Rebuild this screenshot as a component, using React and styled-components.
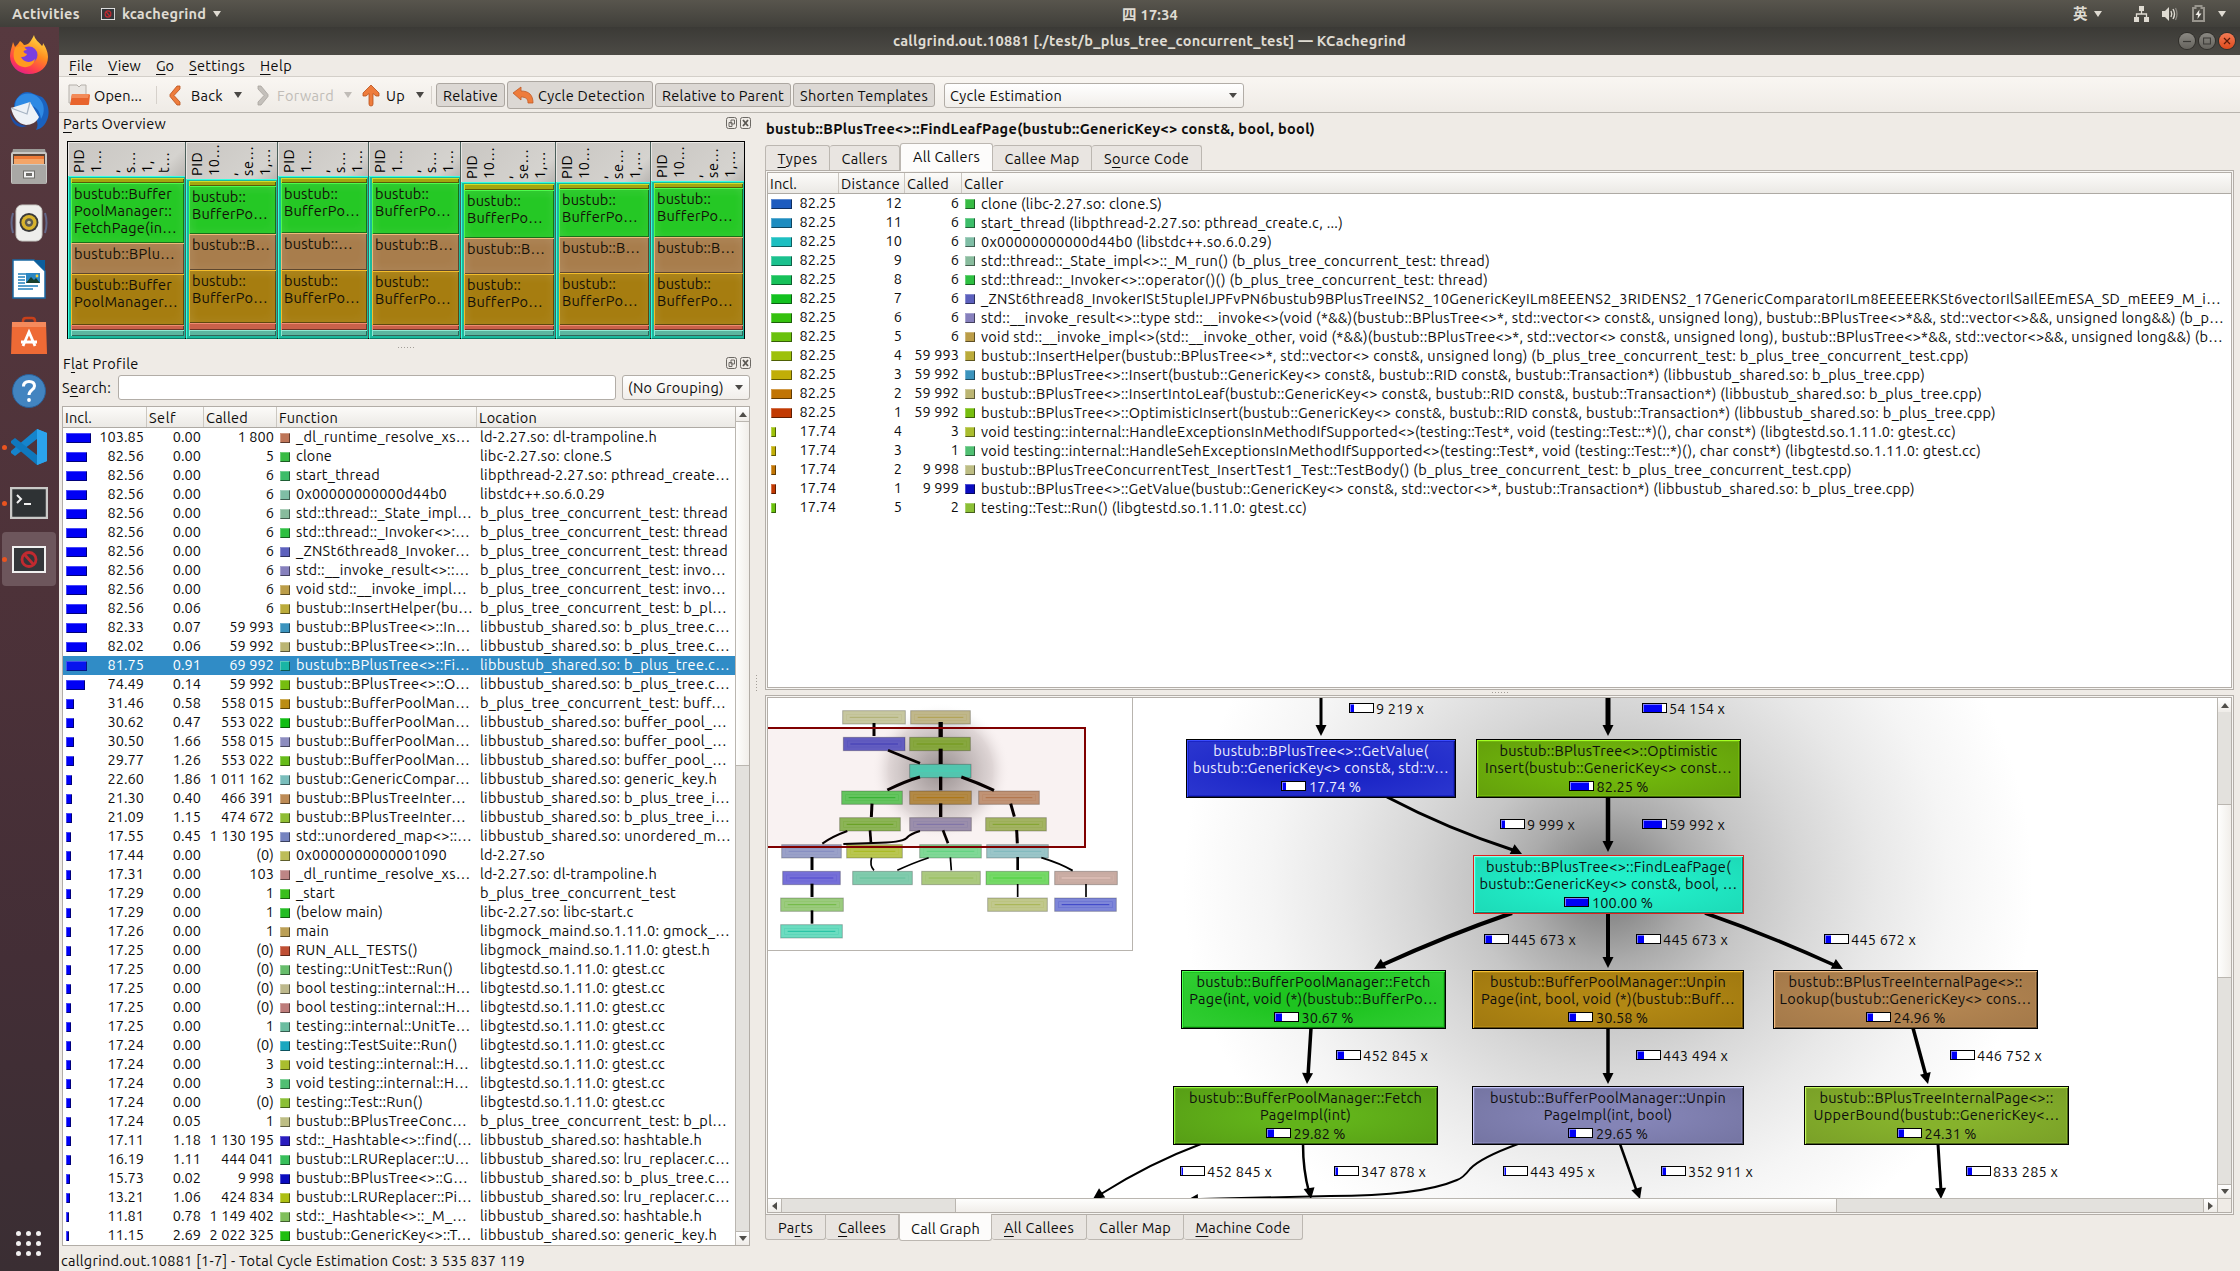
import React, { useLayoutEffect, useRef, useState } from 'react';
import styled, { createGlobalStyle, css } from 'styled-components';

const GlobalStyle = createGlobalStyle`
  * { box-sizing: border-box; }
  html, body { margin: 0; padding: 0; overflow: hidden; }
  body {
    font-family: Ubuntu, "Noto Sans", "Noto Sans CJK SC", sans-serif;
    font-size: 14.5px; line-height: 17px; color: #0c0c0c; background: #efebe6;
  }
`;

/* ---------- text ---------- */
const Label = styled.span`
  display: inline-block; white-space: pre; flex: none;
  font-weight: ${p => (p.$bold ? 700 : 400)};
  color: ${p => p.$color || 'inherit'};
`;
function Fit({ w, bold, color, children }) {
  const ref = useRef(null);
  const [spacing, setSpacing] = useState(0);
  useLayoutEffect(() => {
    if (!w) return;
    const el = ref.current;
    el.style.letterSpacing = '0px';
    const natural = el.getBoundingClientRect().width;
    const s = (w - natural) / el.textContent.length;
    el.style.letterSpacing = s + 'px';
    setSpacing(s);
  }, [w, children]);
  return <Label ref={ref} $bold={bold} $color={color} style={{ letterSpacing: spacing }}>{children}</Label>;
}
const U = styled.u`text-decoration: underline; text-underline-offset: 3px; text-decoration-thickness: 1px; text-decoration-skip-ink: none;`;

/* ---------- shell ---------- */
const Screen = styled.div`width: 2240px; height: 1271px; display: flex; flex-direction: column; overflow: hidden;`;
const TopBar = styled.div`
  height: 27px; flex: none; position: relative; display: flex; align-items: center; justify-content: space-between;
  padding: 0 14px 0 12px; background: linear-gradient(#58554d, #403f3a); color: #dfdbd2;
`;
const TopGroup = styled.div`display: flex; align-items: center; height: 27px;`;
const TopCenter = styled.div`position: absolute; left: 1122px; top: 6px;`;
const Gap = styled.div`width: ${p => p.$w}px; flex: none;`;
const Body = styled.div`flex: 1; display: flex; min-height: 0;`;
const Launcher = styled.div`
  width: 59px; flex: none; display: flex; flex-direction: column;
  background: linear-gradient(#57393f, #4d3239 45%, #432e36 75%, #3a2e33);
`;
const Slot = styled.div`
  height: 56px; display: flex; align-items: center; justify-content: center; position: relative; padding-right: 2px;
  svg { display: block; }
  ${p => p.$active && css`
    &::before { content: ''; position: absolute; inset: 1px 3px 1px 2px; background: #6d565c; border-radius: 4px; }
    svg { position: relative; }
  `}
  ${p => p.$running && css`
    &::after { content: ''; position: absolute; left: 2px; top: 26px; width: 5px; height: 5px; border-radius: 50%; background: #e95420; }
  `}
`;
const AppsGrid = styled.div`
  margin: auto 2px 15px 0; align-self: center; display: grid; grid-template-columns: repeat(3, 5px); gap: 5px;
  i { width: 5px; height: 5px; border-radius: 50%; background: #f3f1f1; }
`;
const Window = styled.div`flex: 1; min-width: 0; display: flex; flex-direction: column; background: #efebe6;`;
const TitleBar = styled.div`
  height: 28px; flex: none; display: flex; align-items: center; padding: 0 5px 2px 834px;
  background: linear-gradient(#3b3a36, #4c4a45); color: #dfdbd2;
`;
const Buttons = styled.div`display: flex; gap: 4px; margin: 2px 0 0 auto;`;
const WinButton = styled.div`
  width: 16px; height: 16px; border-radius: 50%; display: flex; align-items: center; justify-content: center;
  background: ${p => (p.$close ? 'linear-gradient(#f47b55, #dd4a1c)' : 'linear-gradient(#8b8983, #65635d)')};
  box-shadow: 0 0 0 1px rgba(40,38,34,.7);
`;
const MenuBar = styled.div`
  height: 22px; flex: none; display: flex; align-items: center; padding-left: 10px; gap: 15px; border-bottom: 1px solid #d3cfc9;
`;
const ToolBar = styled.div`
  height: 36px; flex: none; display: flex; align-items: center; padding: 1px 0 0 9px;
  background: linear-gradient(#f9f6f2, #efebe6); border-bottom: 1px solid #b8b4ae;
  svg { flex: none; }
`;
const ToolSeparator = styled.div`width: 1px; height: 18px; background: #d6d1cb; flex: none;`;
const ToggleButton = styled.div`
  width: ${p => p.$w}px; height: ${p => p.$h || 24}px; flex: none; display: flex; align-items: center; gap: 4px;
  padding-left: ${p => (p.$pad || 7) - 1}px; margin-right: 2px; background: #dcd8d4; border: 1px solid #aca7a1; border-radius: 3px;
`;
const Combo = styled.div`
  width: ${p => p.$w}px; height: 25px; flex: none; display: flex; align-items: center; justify-content: space-between;
  padding: 0 6px 0 5px; border: 1px solid #b2ada7; border-radius: 3px; background: linear-gradient(#fff, #f1eeea);
`;
const Caret = styled.i`
  width: 0; height: 0; flex: none; border: solid transparent;
  border-width: ${p => (p.$small ? '5px 4px 0' : '6px 4.5px 0')};
  border-top-color: ${p => p.$color || '#4a4845'};
`;
const Main = styled.div`flex: 1; min-height: 0; display: flex;`;
const StatusBar = styled.div`height: 23px; flex: none; padding: 4px 0 0 2px;`;

/* ---------- docks ---------- */
const Dock = styled.div`width: 693px; flex: none; display: flex; flex-direction: column; padding-left: 3px;`;
const DockTitle = styled.div`
  height: ${p => p.$h}px; flex: none; display: flex; align-items: center; justify-content: space-between; padding: 0 1px 2px 1px;
`;
const DockIcons = styled.div`display: flex; gap: 3px;`;
const VGrip = styled.div`
  width: 13px; flex: none; display: flex; flex-direction: column; align-items: center; padding-top: 562px; gap: 2px; padding-right: 4px;
  i { width: 1px; height: 1px; background: #a39e98; }
`;
const HGrip = styled.div`
  height: ${p => p.$h}px; flex: none; display: flex; align-items: center; justify-content: center; gap: 2px; padding-right: ${p => p.$pr || 0}px;
  i { width: 1px; height: 1px; background: #a39e98; }
`;
const dots = n => Array.from({ length: n }, (_, i) => <i key={i} />);

/* ---------- parts tree map ---------- */
const Treemap = styled.div`
  width: 678px; height: 198px; margin: 6px 0 0 5px; display: flex; flex: none; border: 1px solid #000; background: #18c8a8;
`;
const Part = styled.div`
  width: ${p => p.$w}px; height: 196px; flex: none; display: flex; flex-direction: column; border-right: 1px solid #4b5f5a;
  &:last-child { border-right: 0; }
`;
const PartHead = styled.div`
  height: ${p => p.$h}px; flex: none; transform: rotate(180deg); display: flex; padding-top: 3px; padding-right: 1px;
  background: linear-gradient(135deg, #b9b6b2, #d5d3cf 20%, #c9c6c2); border: solid #e9e7e4; border-width: 0 1px 1px 0; overflow: hidden;
`;
const PartLines = styled.div`
  writing-mode: vertical-rl; white-space: pre; height: 100%; margin-left: auto; line-height: 17px; letter-spacing: .6px; color: #000;
`;
const PartBody = styled.div`
  flex: 1; display: flex; flex-direction: column; padding: 1px 1px 2px 2px; background: #1bb99d;
  border-top: 1px solid #35ffe0; border-left: 1px solid #35ffe0; border-bottom: 1px solid #0b7a66;
`;
const Tile = styled.div`
  height: ${p => p.$h}px; flex: none; padding: 2px 0 0 3px; overflow: hidden; background: ${p => p.$bg};
  box-shadow: inset 1px 1px ${p => p.$hi}, inset -1px -1px rgba(0,0,0,.45), inset 4px 4px 8px rgba(255,255,255,.07), inset -4px -4px 8px rgba(255,255,255,.05);
  display: flex; flex-direction: column; align-items: flex-start; white-space: pre; color: #131008;
`;
const Strip = styled(Tile)`padding: 0; box-shadow: inset 1px 1px ${p => p.$hi}, inset -1px -1px rgba(0,0,0,.45);`;
const PARTS = [
  [118, 176, 183, 243, 274, 325, ['PID', '1…', ',', 's…', '1,', 't…'], [['bustub::Buffer', 98], ['PoolManager::', 98], ['FetchPage(in…', 103]], [['bustub::BPlu…', 101]], [['bustub::Buffer', 98], ['PoolManager…', 104]]],
  [92, 179, 186, 234, 270, 323, ['PID', '10…', ',', 'se…', '1,…'], null, [['bustub::B…', 78]]],
  [91, 176, 183, 233, 270, 323, ['PID', '1…', ',', 's…', '1…'], null, [['bustub::…', 69]]],
  [92, 176, 183, 234, 271, 325, ['PID', '1…', ',', 's…', '1…'], null, [['bustub::B…', 78]]],
  [95, 182, 190, 238, 274, 325, ['PID', '10…', ',', 'se…', '1,…'], null, [['bustub::B…', 78]]],
  [95, 182, 189, 237, 273, 325, ['PID', '10…', ',', 'se…', '1,…'], null, [['bustub::B…', 78]]],
  [93, 181, 188, 237, 273, 325, ['PID', '10…', ',', 'se…', '1,…'], null, [['bustub::B…', 78]]],
];
const SHORT = [['bustub::', 54], ['BufferPo…', 76]];
const lines = list => list.map(([t, w], i) => <Fit key={i} w={w}>{t}</Fit>);

function PartsMap() {
  return (
    <Treemap>
      {PARTS.map(([w, top, g, b, o, r, head, green, brown, gold], i) => (
        <Part key={i} $w={w}>
          <PartHead $h={top - 142}><PartLines>{head.join('\n')}</PartLines></PartHead>
          <PartBody>
            <Strip $h={g - top - 2} $bg="#a3a70f" $hi="#d0dc2c" />
            <Tile $h={b - g} $bg="#25c825" $hi="#4dfc4d">{lines(green || SHORT)}</Tile>
            <Tile $h={o - b} $bg="#a87d4c" $hi="#efb878">{lines(brown)}</Tile>
            <Tile $h={r - o} $bg="#a67d10" $hi="#f3bd2b">{lines(gold || SHORT)}</Tile>
            <Strip $h={330 - r} $bg="#c9614a" $hi="#f08b72" />
            <Strip $h={6} $bg="#5bb6a0" $hi="#8fe8d2" />
          </PartBody>
        </Part>
      ))}
    </Treemap>
  );
}

/* ---------- tables ---------- */
const SearchBlock = styled.div`padding-top: 2px; flex: none;`;
const SearchRow = styled.div`height: 25px; display: flex; align-items: center;`;
const SearchInput = styled.div`width: 498px; height: 25px; margin: 0 6px 0 7px; background: #fff; border: 1px solid #b2ada7; border-radius: 3px;`;
const FlatFrame = styled.div`
  width: 688px; height: 840px; margin-top: 6px; display: flex; border: 1px solid #b2ada7; background: #fff;
`;
const Rows = styled.div`flex: 1; min-width: 0;`;
const HeadRow = styled.div`
  height: 21px; display: grid; grid-template-columns: ${p => p.$cols}; background: linear-gradient(#fcfbf9, #ebe9e5);
  border-bottom: 1px solid #aeaaa4;
`;
const HeadCell = styled.div`padding: 2px 0 0 2px; border-right: 1px solid #cbc7c1; white-space: nowrap; &:last-child { border-right: 0; }`;
const Row = styled.div`
  height: 19px; display: grid; grid-template-columns: ${p => p.$cols}; align-items: center; line-height: 19px;
  ${p => p.$selected && css`background: #308cc6; color: #fff;`}
`;
const Cell = styled.div`
  display: flex; align-items: center; height: 19px; min-width: 0; padding-left: ${p => p.$pl || 0}px; padding-right: ${p => p.$pr || 0}px;
  justify-content: ${p => (p.$right ? 'flex-end' : p.$split ? 'space-between' : 'flex-start')};
  ${p => p.$raise && css`span { margin-top: -2px; }`}
`;
const Bar = styled.i`
  width: ${p => p.$w}px; height: 10px; flex: none; background: ${p => p.$c}; opacity: ${p => (p.$dim ? 0.85 : 1)};
  box-shadow: inset 1px 1px rgba(255,255,255,.28), inset -1px -1px rgba(0,0,0,.5);
`;
const Chip = styled(Bar)`margin-right: ${p => p.$gap}px;`;

const ScrollV = styled.div`
  width: 14px; flex: none; display: flex; flex-direction: column; border-left: 1px solid #bab6b0; background: #e3e1dd;
`;
const ScrollH = styled.div`height: 14px; flex: none; display: flex; border-top: 1px solid #bab6b0; background: #e3e1dd;`;
const ArrowBox = styled.div`
  ${p => (p.$h ? 'width: 14px;' : 'height: 14px;')} flex: none; display: flex; align-items: center; justify-content: center;
  background: linear-gradient(#fff, #efece8); border: 0 solid #bab6b0; border-width: ${p => p.$b};
  &::after {
    content: ''; border: 4px solid transparent;
    ${p => p.$dir === 'up' && 'border-bottom: 5px solid #504e4a; border-top: 0;'}
    ${p => p.$dir === 'down' && 'border-top: 5px solid #504e4a; border-bottom: 0;'}
    ${p => p.$dir === 'left' && 'border-right: 5px solid #504e4a; border-left: 0;'}
    ${p => p.$dir === 'right' && 'border-left: 5px solid #504e4a; border-right: 0;'}
  }
`;
const ScrollCorner = styled.div`width: 14px; flex: none; background: #efebe6; border-left: 1px solid #bab6b0;`;
const Thumb = styled.div`
  ${p => (p.$h ? `width: ${p.$len}px; border-width: 0 1px;` : `height: ${p.$len}px; border-width: 1px 0;`)} flex: none;
  border-style: solid; border-color: #bab6b0; background: linear-gradient(${p => (p.$h ? '180deg' : '90deg')}, #fefefd, #f1eeea);
`;
const Track = styled.div`${p => (p.$len ? `flex: 0 0 ${p.$len}px;` : 'flex: 1;')}`;

const BT = 'b_plus_tree_concurrent_test';
const LS = 'libbustub_shared.so: ';
const GT = ['libgtestd.so.1.11.0: gtest.cc', 185];
const FLAT = [
  ['103.85', '0.00', '1 800', '#be7558', '_dl_runtime_resolve_xs…', 174.5, 'ld-2.27.so: dl-trampoline.h', 177],
  ['82.56', '0.00', '5', '#38bb44', 'clone', 36, 'libc-2.27.so: clone.S', 132],
  ['82.56', '0.00', '6', '#3dbd69', 'start_thread', 84, 'libpthread-2.27.so: pthread_create…', 250],
  ['82.56', '0.00', '6', '#7fbda5', '0x00000000000d44b0', 151, 'libstdc++.so.6.0.29', 125],
  ['82.56', '0.00', '6', '#88bb9d', 'std::thread::_State_impl…', 176, BT + ': thread', 248],
  ['82.56', '0.00', '6', '#2ebf42', 'std::thread::_Invoker<>:…', 174, BT + ': thread', 248],
  ['82.56', '0.00', '6', '#5c60bd', '_ZNSt6thread8_Invoker…', 174, BT + ': thread', 248],
  ['82.56', '0.00', '6', '#8680bd', 'std::__invoke_result<>::…', 173.5, BT + ': invo…', 246],
  ['82.56', '0.00', '6', '#bb9d48', 'void std::__invoke_impl…', 171, BT + ': invo…', 246],
  ['82.56', '0.06', '6', '#bbab3b', 'bustub::InsertHelper(bu…', 177, BT + ': b_pl…', 247],
  ['82.33', '0.07', '59 993', '#3b93bd', 'bustub::BPlusTree<>::In…', 174.5, LS + 'b_plus_tree.c…', 250],
  ['82.02', '0.06', '59 992', '#bbb573', 'bustub::BPlusTree<>::In…', 174.5, LS + 'b_plus_tree.c…', 250],
  ['81.75', '0.91', '69 992', '#19b5a4', 'bustub::BPlusTree<>::Fi…', 174, LS + 'b_plus_tree.c…', 250, true],
  ['74.49', '0.14', '59 992', '#76bd0f', 'bustub::BPlusTree<>::O…', 174, LS + 'b_plus_tree.c…', 250],
  ['31.46', '0.58', '558 015', '#bb8d13', 'bustub::BufferPoolMan…', 174, BT + ': buff…', 246],
  ['30.62', '0.47', '553 022', '#11bd13', 'bustub::BufferPoolMan…', 174, LS + 'buffer_pool_…', 247],
  ['30.50', '1.66', '558 015', '#8c8cbf', 'bustub::BufferPoolMan…', 174, LS + 'buffer_pool_…', 247],
  ['29.77', '1.26', '553 022', '#66bb1a', 'bustub::BufferPoolMan…', 174, LS + 'buffer_pool_…', 247],
  ['22.60', '1.86', '1 011 162', '#79bdbb', 'bustub::GenericCompar…', 174, LS + 'generic_key.h', 237],
  ['21.30', '0.40', '466 391', '#bd8b55', 'bustub::BPlusTreeInter…', 170, LS + 'b_plus_tree_i…', 250],
  ['21.09', '1.15', '474 672', '#8fbd34', 'bustub::BPlusTreeInter…', 170, LS + 'b_plus_tree_i…', 250],
  ['17.55', '0.45', '1 130 195', '#7583bf', 'std::unordered_map<>::…', 176, LS + 'unordered_m…', 251],
  ['17.44', '0.00', '(0)', '#bdbd59', '0x0000000000001090', 151, 'ld-2.27.so', 65],
  ['17.31', '0.00', '103', '#bd8585', '_dl_runtime_resolve_xs…', 174.5, 'ld-2.27.so: dl-trampoline.h', 177],
  ['17.29', '0.00', '1', '#3abf1c', '_start', 39, BT, 196],
  ['17.29', '0.00', '1', '#24bd24', '(below main)', 87, 'libc-2.27.so: libc-start.c', 153.5],
  ['17.26', '0.00', '1', '#bb9f55', 'main', 33, 'libgmock_maind.so.1.11.0: gmock_…', 250],
  ['17.25', '0.00', '(0)', '#bf4f34', 'RUN_ALL_TESTS()', 122, 'libgmock_maind.so.1.11.0: gtest.h', 230],
  ['17.25', '0.00', '(0)', '#67bd6c', 'testing::UnitTest::Run()', 157, ...GT],
  ['17.25', '0.00', '(0)', '#bdb88c', 'bool testing::internal::H…', 174.5, ...GT],
  ['17.25', '0.00', '(0)', '#bd7c7a', 'bool testing::internal::H…', 174.5, ...GT],
  ['17.25', '0.00', '1', '#6bbda0', 'testing::internal::UnitTe…', 174.5, ...GT],
  ['17.24', '0.00', '(0)', '#1ba7bf', 'testing::TestSuite::Run()', 161.5, ...GT],
  ['17.24', '0.00', '3', '#aabd2e', 'void testing::internal::H…', 173, ...GT],
  ['17.24', '0.00', '3', '#50bf72', 'void testing::internal::H…', 173, ...GT],
  ['17.24', '0.00', '(0)', '#8bbf36', 'testing::Test::Run()', 127, ...GT],
  ['17.24', '0.05', '1', '#bdbd84', 'bustub::BPlusTreeConc…', 171, BT + ': b_pl…', 247],
  ['17.11', '1.18', '1 130 195', '#2a1dbf', 'std::_Hashtable<>::find(…', 175.5, LS + 'hashtable.h', 222],
  ['16.19', '1.11', '444 041', '#38bf5b', 'bustub::LRUReplacer::U…', 173.5, LS + 'lru_replacer.c…', 250],
  ['15.73', '0.02', '9 998', '#0a0cbf', 'bustub::BPlusTree<>::G…', 172, LS + 'b_plus_tree.c…', 250],
  ['13.21', '1.06', '424 834', '#adbf13', 'bustub::LRUReplacer::Pi…', 176, LS + 'lru_replacer.c…', 250],
  ['11.81', '0.78', '1 149 402', '#80bf5b', 'std::_Hashtable<>::_M_…', 171, LS + 'hashtable.h', 222],
  ['11.15', '2.69', '2 022 325', '#20bf0f', 'bustub::GenericKey<>::T…', 175.5, LS + 'generic_key.h', 237],
];
const numWidth = s => [...s].reduce((a, c) => a + (/\d/.test(c) ? 8.27 : c === '.' ? 3.4 : c === ' ' ? 3.3 : 4.7), 0);
const barWidth = v => Math.min(25, Math.ceil(parseFloat(v) * 0.25));
const FCOLS = '84px 57px 73px 200px 1fr';

function FlatProfile() {
  return (
    <FlatFrame>
      <Rows>
        <HeadRow $cols={FCOLS}>
          <HeadCell><Fit w={27}>Incl.</Fit></HeadCell>
          <HeadCell><Fit w={27}>Self</Fit></HeadCell>
          <HeadCell><Fit w={42}>Called</Fit></HeadCell>
          <HeadCell><Fit w={59}>Function</Fit></HeadCell>
          <HeadCell><Fit w={58}>Location</Fit></HeadCell>
        </HeadRow>
        {FLAT.map(([inc, self, called, c, fn, fw, loc, lw, sel], i) => (
          <Row key={i} $cols={FCOLS} $selected={sel}>
            <Cell $raise $split $pl={3} $pr={3}><Bar $w={barWidth(inc)} $c="#0000f5" $dim={sel} /><Fit w={numWidth(inc)}>{inc}</Fit></Cell>
            <Cell $raise $right $pr={3}><Fit w={numWidth(self)}>{self}</Fit></Cell>
            <Cell $raise $right $pr={3}><Fit w={numWidth(called)}>{called}</Fit></Cell>
            <Cell $raise $pl={3}><Chip $w={10} $c={c} $gap={6} /><Fit w={fw}>{fn}</Fit></Cell>
            <Cell $raise $pl={3}><Fit w={lw}>{loc}</Fit></Cell>
          </Row>
        ))}
      </Rows>
      <ScrollV>
        <ArrowBox $dir="up" $b="0" />
        <Thumb $len={345} />
        <Track />
        <ArrowBox $dir="down" $b="1px 0 0 0" />
      </ScrollV>
    </FlatFrame>
  );
}

/* ---------- right side ---------- */
const Right = styled.div`width: 1469px; flex: none; display: flex; flex-direction: column;`;
const FunctionTitle = styled.div`height: 30px; flex: none; padding: 7px 0 0 1px;`;
const Tabs = styled.div`height: 27px; flex: none; display: flex; align-items: ${p => (p.$bottom ? 'flex-start' : 'flex-end')};`;
const Tab = styled.div`
  width: ${p => p.$w}px; height: ${p => (p.$on ? 27 : 25)}px; flex: none; display: flex; align-items: center; justify-content: center;
  border: 1px solid #bcb7b1; ${p => (p.$bottom ? 'border-top: 0; border-radius: 0 0 3px 3px;' : 'border-bottom: 0; border-radius: 3px 3px 0 0;')}
  ${p => !p.$on && !p.$first && 'border-left: 0;'}
  background: ${p => (p.$on ? '#fdfcfb' : '#e9e5e1')};
  ${p => p.$on && !p.$bottom && 'padding-bottom: 2px; height: 28px; margin-bottom: -1px; position: relative;'}
  ${p => p.$on && p.$bottom && 'padding-top: 2px; margin-top: -1px; position: relative;'}
`;
const Pane = styled.div`
  height: ${p => p.$h}px; flex: none; border: 1px solid #b3aea8; padding: 1px; background: #f7f5f2;
`;
const PaneInner = styled.div`height: 100%; border: 1px solid #b3aea8; background: #fff; display: flex; flex-direction: column; overflow: hidden;`;

const CALLERS = [
  ['82.25', '12', '6', '#1e5cbf', '#38bb44', 'clone (libc-2.27.so: clone.S)', 181],
  ['82.25', '11', '6', '#1d8cc0', '#3dbd69', 'start_thread (libpthread-2.27.so: pthread_create.c, ...)', 362],
  ['82.25', '10', '6', '#1dbfc1', '#7fbda5', '0x00000000000d44b0 (libstdc++.so.6.0.29)', 291],
  ['82.25', '9', '6', '#1bc18e', '#88bb9d', 'std::thread::_State_impl<>::_M_run() (b_plus_tree_concurrent_test: thread)', 509],
  ['82.25', '8', '6', '#17c15a', '#2ebf42', 'std::thread::_Invoker<>::operator()() (b_plus_tree_concurrent_test: thread)', 507],
  ['82.25', '7', '6', '#13c120', '#5c60bd', '_ZNSt6thread8_InvokerISt5tupleIJPFvPN6bustub9BPlusTreeINS2_10GenericKeyILm8EEENS2_3RIDENS2_17GenericComparatorILm8EEEEERKSt6vectorIlSaIlEEmESA_SD_mEEE9_M_i…', 1240],
  ['82.25', '6', '6', '#35c10e', '#8680bd', 'std::__invoke_result<>::type std::__invoke<>(void (*&&)(bustub::BPlusTree<>*, std::vector<> const&, unsigned long), bustub::BPlusTree<>*&&, std::vector<>&&, unsigned long&&) (b_p…', 1243],
  ['82.25', '5', '6', '#6ac10c', '#bb9d48', 'void std::__invoke_impl<>(std::__invoke_other, void (*&&)(bustub::BPlusTree<>*, std::vector<> const&, unsigned long), bustub::BPlusTree<>*&&, std::vector<>&&, unsigned long&&) (b…', 1242],
  ['82.25', '4', '59 993', '#9dc10a', '#bbab3b', 'bustub::InsertHelper(bustub::BPlusTree<>*, std::vector<> const&, unsigned long) (b_plus_tree_concurrent_test: b_plus_tree_concurrent_test.cpp)', 988],
  ['82.25', '3', '59 992', '#c1ae07', '#3b93bd', 'bustub::BPlusTree<>::Insert(bustub::GenericKey<> const&, bustub::RID const&, bustub::Transaction*) (libbustub_shared.so: b_plus_tree.cpp)', 944],
  ['82.25', '2', '59 992', '#c17504', '#bbb573', 'bustub::BPlusTree<>::InsertIntoLeaf(bustub::GenericKey<> const&, bustub::RID const&, bustub::Transaction*) (libbustub_shared.so: b_plus_tree.cpp)', 1001],
  ['82.25', '1', '59 992', '#c13a03', '#76bd0f', 'bustub::BPlusTree<>::OptimisticInsert(bustub::GenericKey<> const&, bustub::RID const&, bustub::Transaction*) (libbustub_shared.so: b_plus_tree.cpp)', 1015],
  ['17.74', '4', '3', '#9dc10a', '#aabd2e', 'void testing::internal::HandleExceptionsInMethodIfSupported<>(testing::Test*, void (testing::Test::*)(), char const*) (libgtestd.so.1.11.0: gtest.cc)', 975],
  ['17.74', '3', '1', '#c1ae07', '#50bf72', 'void testing::internal::HandleSehExceptionsInMethodIfSupported<>(testing::Test*, void (testing::Test::*)(), char const*) (libgtestd.so.1.11.0: gtest.cc)', 1000],
  ['17.74', '2', '9 998', '#c17504', '#bdbd84', 'bustub::BPlusTreeConcurrentTest_InsertTest1_Test::TestBody() (b_plus_tree_concurrent_test: b_plus_tree_concurrent_test.cpp)', 871],
  ['17.74', '1', '9 999', '#c13a03', '#0a0cbf', 'bustub::BPlusTree<>::GetValue(bustub::GenericKey<> const&, std::vector<>*, bustub::Transaction*) (libbustub_shared.so: b_plus_tree.cpp)', 934],
  ['17.74', '5', '2', '#6ac10c', '#8bbf36', 'testing::Test::Run() (libgtestd.so.1.11.0: gtest.cc)', 326],
];
const CCOLS = '71px 66px 57px 1fr';

function AllCallers() {
  return (
    <PaneInner>
      <HeadRow $cols={CCOLS}>
        <HeadCell><Fit w={27}>Incl.</Fit></HeadCell>
        <HeadCell><Fit w={59}>Distance</Fit></HeadCell>
        <HeadCell><Fit w={42}>Called</Fit></HeadCell>
        <HeadCell><Fit w={40}>Caller</Fit></HeadCell>
      </HeadRow>
      {CALLERS.map(([inc, dist, called, bar, chip, name, w], i) => (
        <Row key={i} $cols={CCOLS}>
          <Cell $raise $split $pl={3} $pr={3}><Bar $w={barWidth(inc)} $c={bar} /><Fit w={numWidth(inc)}>{inc}</Fit></Cell>
          <Cell $raise $right $pr={3}><Fit w={numWidth(dist)}>{dist}</Fit></Cell>
          <Cell $raise $right $pr={3}><Fit w={numWidth(called)}>{called}</Fit></Cell>
          <Cell $pl={3}><Chip $w={10} $c={chip} $gap={6} /><Fit w={w}>{name}</Fit></Cell>
        </Row>
      ))}
    </PaneInner>
  );
}

/* ---------- call graph ---------- */
const OX = 768, OY = 698;
const Viewport = styled.div`flex: 1; min-height: 0; display: flex;`;
const Canvas = styled.div`
  position: relative; flex: 1; overflow: hidden;
  background: radial-gradient(ellipse 425px 400px at 840px 187px, #808080 0, #8e8e8e 9%, #ababab 19%, #c6c6c6 32%, #d7d7d7 46%, #e8e8e8 63%, #f5f5f5 80%, #fff 100%) #fff;
`;
const EdgeLayer = styled.svg`position: absolute; inset: 0; display: block;`;
const Node = styled.div`
  position: absolute; left: ${p => p.$x - OX}px; top: ${p => p.$y - OY}px; width: ${p => p.$w}px; height: 59px;
  display: flex; flex-direction: column; align-items: center; padding-top: 2px; white-space: pre; color: ${p => (p.$light ? '#eef' : '#0e0e0e')};
  border: 1px solid ${p => (p.$active ? '#e0201c' : '#000')};
  background: radial-gradient(ellipse 60% 70%, ${p => p.$mid} 30%, ${p => p.$edge} 100%);
  box-shadow: inset 1px 1px ${p => p.$hi}, inset -1px -1px rgba(0,0,0,.45), inset 2px 2px ${p => p.$mid}, inset -2px -2px ${p => p.$mid};
`;
const Share = styled.div`display: flex; align-items: center; gap: 3px; height: 19px; margin-top: 1px;`;
const EdgeLabel = styled.div`
  position: absolute; left: ${p => p.$x - OX}px; top: ${p => p.$y - OY - 4}px; display: flex; align-items: center; gap: 2px; height: 19px;
`;
const Gauge = styled.i`
  width: 25px; height: 10px; flex: none; border: 1px solid #000; background: #fff; display: block; margin-top: -1px;
  &::before {
    content: ''; display: block; height: 8px; width: ${p => p.$v}px; background: #0000f5;
    box-shadow: inset 1px 1px #7d7dff;
  }
`;
const NODES = [
  { x: 1186, y: 739, w: 270, a: ['bustub::BPlusTree<>::GetValue(', 215.5], b: ['bustub::GenericKey<> const&, std::v…', 256], pct: '17.74 %', v: 4, mid: '#1a24c6', edge: '#2a35cf', hi: '#3a4cff', light: true },
  { x: 1476, y: 739, w: 265, a: ['bustub::BPlusTree<>::Optimistic', 218], b: ['Insert(bustub::GenericKey<> const…', 247], pct: '82.25 %', v: 19, mid: '#71b70c', edge: '#65a20b', hi: '#a5ff25' },
  { x: 1473, y: 855, w: 271, a: ['bustub::BPlusTree<>::FindLeafPage(', 245], b: ['bustub::GenericKey<> const&, bool, …', 258], pct: '100.00 %', v: 23, mid: '#22efc9', edge: '#1ddcb9', hi: '#8cffea', active: true },
  { x: 1181, y: 970, w: 265, a: ['bustub::BufferPoolManager::Fetch', 234], b: ['Page(int, void (*)(bustub::BufferPo…', 248.5], pct: '30.67 %', v: 7, mid: '#1ec420', edge: '#30cd32', hi: '#4cff4e' },
  { x: 1472, y: 970, w: 272, a: ['bustub::BufferPoolManager::Unpin', 236], b: ['Page(int, bool, void (*)(bustub::Buff…', 254], pct: '30.58 %', v: 7, mid: '#b28814', edge: '#a27a10', hi: '#f6c133' },
  { x: 1773, y: 970, w: 265, a: ['bustub::BPlusTreeInternalPage<>::', 234], b: ['Lookup(bustub::GenericKey<> cons…', 252], pct: '24.96 %', v: 6, mid: '#b48652', edge: '#a57a4a', hi: '#f5bf83' },
  { x: 1173, y: 1086, w: 265, a: ['bustub::BufferPoolManager::Fetch', 233], b: ['PageImpl(int)', 91], pct: '29.82 %', v: 7, mid: '#62b31a', edge: '#58a016', hi: '#94f638' },
  { x: 1472, y: 1086, w: 272, a: ['bustub::BufferPoolManager::Unpin', 236], b: ['PageImpl(int, bool)', 128.5], pct: '29.65 %', v: 7, mid: '#8484b6', edge: '#7676a4', hi: '#c4c4f6' },
  { x: 1804, y: 1086, w: 265, a: ['bustub::BPlusTreeInternalPage<>::', 234], b: ['UpperBound(bustub::GenericKey<…', 246], pct: '24.31 %', v: 6, mid: '#86b22c', edge: '#7ba228', hi: '#c4f85e' },
];
const LABELS = [
  [1349, 703, '9 219 x', 48, 4], [1642, 703, '54 154 x', 56, 19],
  [1500, 819, '9 999 x', 48, 4], [1642, 819, '59 992 x', 56, 19],
  [1484, 934, '445 673 x', 65, 7], [1636, 934, '445 673 x', 65, 7], [1824, 934, '445 672 x', 65, 6],
  [1336, 1050, '452 845 x', 65, 7], [1636, 1050, '443 494 x', 65, 7], [1950, 1050, '446 752 x', 65, 6],
  [1180, 1166, '452 845 x', 65, 2], [1334, 1166, '347 878 x', 65, 3], [1503, 1166, '443 495 x', 65, 2],
  [1661, 1166, '352 911 x', 65, 4], [1966, 1166, '833 285 x', 65, 5],
];
/* path, stroke width, arrow tip x, tip y, heading in degrees (0 = down) */
const EDGES = [
  ['M1321 690V727', 3, 1321, 736, 0],
  ['M1608 690V727', 5, 1608, 736, 0],
  ['M1387 797Q1448 829 1513 850', 3, 1522, 854, -64],
  ['M1608 797V843', 4.5, 1608, 852, 0],
  ['M1512 913Q1448 935 1382 965', 4, 1374, 969, 60],
  ['M1608 913V959', 4, 1608, 968, 0],
  ['M1705 913Q1768 935 1834 965', 3.5, 1843, 969, -62],
  ['M1311 1028L1308 1076', 3.5, 1307, 1084, 3],
  ['M1608 1028V1076', 3.5, 1608, 1084, 0],
  ['M1913 1028L1926 1076', 3.5, 1928, 1084, -14],
  ['M1201 1144Q1150 1163 1101 1194', 2, 1093, 1199, 56],
  ['M1303 1144Q1303 1170 1309 1192', 2.5, 1311, 1199, -10],
  ['M1518 1144Q1480 1158 1470 1169Q1463 1178 1457 1180Q1420 1196 1330 1196L1200 1199', 2, 1187, 1200, 88],
  ['M1620 1144L1637 1192', 2.5, 1640, 1199, -18],
  ['M1938 1144L1941 1191', 3, 1941, 1199, -2],
];

const Overview = styled.div`
  position: absolute; left: 0; top: 0; width: 365px; height: 253px; background: #fff; border: solid #b8b4ae; border-width: 0 1px 1px 0;
  svg { display: block; }
`;
const MINI = [
  [247, 91, 190, '#c7c7a0', '#afaf70'], [451, 91, 181, '#c0b78b', '#b0a050'], [249, 171, 187, '#6163cb', '#3c40c0'], [448, 171, 184, '#87b044', '#70a018'],
  [448, 252, 186, '#51d0b8', '#40dcc0'], [244, 332, 184, '#63cf65', '#2eb830'], [448, 332, 187, '#b5914a', '#b07c14'], [655, 332, 184, '#c39b7c', '#b47a4c'],
  [238, 412, 184, '#8dbe5c', '#62a820'], [448, 412, 187, '#9c96b5', '#7c78b0'], [676, 412, 184, '#a5bd69', '#80ac2c'],
  [64, 493, 181, '#9aa1c8', '#848cc0'], [259, 493, 169, '#b9c651', '#a8b820'], [478, 493, 187, '#80d896', '#60d080'], [679, 493, 187, '#9ac5c8', '#80b8bc'],
  [67, 573, 175, '#7670d8', '#5048d0'], [277, 573, 181, '#81cbad', '#62c09a'], [484, 573, 178, '#abc97f', '#94bc58'], [677, 573, 191, '#76d968', '#48d038'], [883, 573, 190, '#c8aba2', '#e8c8c0'],
  [61, 653, 190, '#9bcb7e', '#70b840'], [682, 653, 181, '#c1c88d', '#a8b450'], [883, 653, 187, '#7e86d8', '#3840c8'],
  [61, 733, 187, '#6cdcc0', '#20c0a0'],
];
const MINI_EDGES = [
  ['M342 129V168', 9], ['M542 126V171', 13], ['M384 211L480 250', 8], ['M542 206V252', 12], ['M480 291Q440 302 382 330', 9], ['M542 290V331', 10], ['M604 291Q650 307 702 331', 9],
  ['M336 371L334 411', 9], ['M542 370V411', 10], ['M752 371L763 410', 9], ['M262 453Q215 470 187 491', 6], ['M330 451L333 490', 8],
  ['M480 453Q450 462 440 474Q425 488 340 489L250 492', 6], ['M549 451L564 490', 8], ['M770 450L772 490', 9], ['M156 531V570', 9], ['M335 533Q328 556 342 571', 5],
  ['M506 533Q450 552 412 571', 5], ['M571 532L574 571', 5], ['M773 531V570', 8], ['M844 533Q900 550 938 572', 6], ['M156 611V651', 9], ['M773 612V651', 5], ['M978 612V651', 5], ['M156 691V731', 8],
];

function MiniMap() {
  return (
    <Overview>
      <svg width="364" height="252" viewBox="24 54 1092 756">
        <defs>
          <radialGradient id="glow">
            <stop offset="0" stopColor="#9a9898" /><stop offset=".35" stopColor="#bdbbbb" /><stop offset=".75" stopColor="#e4e2e2" /><stop offset="1" stopColor="#fff" stopOpacity="0" />
          </radialGradient>
        </defs>
        <ellipse cx="542" cy="272" rx="208" ry="204" fill="url(#glow)" />
        {MINI.map(([x, y, w, c, l], i) => (
          <g key={i}>
            <rect x={x + 1} y={y + 1} width={w - 2} height={40} fill={c} stroke="#000" strokeOpacity=".25" strokeWidth="3" />
            <rect x={x + 13} y={y + 12} width={w - 26} height={18} fill="none" stroke={l} strokeOpacity=".3" strokeWidth="2" />
            <path d={`M${x + 22} ${y + 21}H${x + w - 22}`} stroke={l} strokeWidth="3" />
          </g>
        ))}
        {MINI_EDGES.map(([d, w], i) => <path key={i} d={d} fill="none" stroke="#000" strokeWidth={w} />)}
        <rect x="0" y="144" width="975" height="357" fill="#800000" fillOpacity=".05" stroke="#800000" strokeWidth="6" />
      </svg>
    </Overview>
  );
}

function CallGraph() {
  return (
    <PaneInner>
      <Viewport>
        <Canvas>
          <EdgeLayer width="1449" height="501" viewBox={`${OX} ${OY} 1449 501`}>
            {EDGES.map(([d, w, x, y, a], i) => (
              <g key={i}>
                <path d={d} fill="none" stroke="#000" strokeWidth={w} />
                <path d="M0 0L-5.5 -11H5.5Z" transform={`translate(${x} ${y}) rotate(${a})`} />
              </g>
            ))}
          </EdgeLayer>
          {NODES.map(n => (
            <Node key={n.x + '-' + n.y} $x={n.x} $y={n.y} $w={n.w} $mid={n.mid} $edge={n.edge} $hi={n.hi} $light={n.light} $active={n.active}>
              <Fit w={n.a[1]}>{n.a[0]}</Fit>
              <Fit w={n.b[1]}>{n.b[0]}</Fit>
              <Share><Gauge $v={n.v} /><Fit w={n.pct.length > 7 ? 61 : 52}>{n.pct}</Fit></Share>
            </Node>
          ))}
          {LABELS.map(([x, y, t, w, v], i) => (
            <EdgeLabel key={i} $x={x} $y={y}><Gauge $v={v} /><Fit w={w}>{t}</Fit></EdgeLabel>
          ))}
          <MiniMap />
        </Canvas>
        <ScrollV>
          <ArrowBox $dir="up" $b="0" />
          <Track $len={92} />
          <Thumb $len={174} />
          <Track />
          <ArrowBox $dir="down" $b="1px 0 0 0" />
        </ScrollV>
      </Viewport>
      <ScrollH>
        <ArrowBox $h $dir="left" $b="0 1px 0 0" />
        <Track $len={173} />
        <Thumb $h $len={882} />
        <Track />
        <ArrowBox $h $dir="right" $b="0 0 0 1px" />
        <ScrollCorner />
      </ScrollH>
    </PaneInner>
  );
}

/* ---------- icons ---------- */
const KcgIcon = ({ w, h }) => (
  <svg width={w} height={h} viewBox="0 0 34 27" preserveAspectRatio="none">
    <rect x="1" y="1" width="32" height="25" fill="#33363a" stroke="#f0f0f0" strokeWidth="2" />
    <ellipse cx="17" cy="13.5" rx="7" ry="7" fill="none" stroke="#c02a30" strokeWidth="2.8" />
    <path d="M12.5 8.5L21.5 18.5" stroke="#c02a30" strokeWidth="2.8" />
  </svg>
);
const Firefox = () => (
  <svg width="40" height="40" viewBox="0 0 40 40">
    <defs>
      <linearGradient id="ff" x1=".8" y1="0" x2=".3" y2="1"><stop offset="0" stopColor="#ffe14a" /><stop offset=".45" stopColor="#ff8b1f" /><stop offset=".8" stopColor="#ff3a50" /><stop offset="1" stopColor="#e0208a" /></linearGradient>
    </defs>
    <path d="M25 0c1 5 5 7 8 11 1-1 1-2 1-3 4 6 5 11 5 14 0 10-8 17-19 17S1 31 1 21c0-5 2-9 3-14l2 5 3-3 2-3c2 1 3 3 4 4 5 0 7-4 10-10z" fill="url(#ff)" />
    <circle cx="20" cy="20" r="8.5" fill="#7a3fe0" />
    <path d="M6 13c4-3 9-2 12 2-5 0-4 3 0 4-1 3-5 3-6 3 2 5 9 7 14 2-1 7-9 10-15 7S3 21 6 13z" fill="#ff9a20" />
  </svg>
);
const Thunderbird = () => (
  <svg width="40" height="40" viewBox="0 0 40 40">
    <path d="M10 5C14 0 20 0 25 3l8 3c7 6 8 16 5 23-3 7-7 9-11 10 3-6 1-10-2-13L5 16C5 11 7 8 10 5z" fill="#1a62c0" />
    <path d="M8 8C13 1 24 1 30 7c6 6 6 15 2 21-1-9-6-14-14-14-5 0-9 1-12 4 0-4 0-7 2-10z" fill="#2f8ae4" />
    <path d="M2 17l19-6 9 15c-2 5-8 8-13 8C9 33 4 26 2 17z" fill="#eef2f7" />
    <path d="M2 17l16 6 3-12" fill="none" stroke="#a8b4c4" strokeWidth="1.3" />
    <path d="M1 22c3 8 9 12 17 13C9 39 2 32 1 22z" fill="#1d4fa8" />
  </svg>
);
const Files = () => (
  <svg width="38" height="38" viewBox="0 0 38 38">
    <path d="M3 1h32l1 5H2z" fill="#9b9b98" /><rect x="1" y="4" width="36" height="32" rx="2" fill="#c9c8c5" />
    <rect x="3" y="6" width="32" height="10" fill="#5a4336" /><rect x="4" y="8" width="30" height="3" fill="#ec7a38" /><rect x="4" y="11" width="30" height="5" fill="#f4a568" />
    <rect x="2" y="17" width="34" height="19" rx="1" fill="#a9a8a5" /><rect x="13.500" y="23" width="11" height="7" fill="#f3f3f3" stroke="#6d6c69" /><rect x="16" y="25" width="6" height="3" fill="#6d6c69" />
  </svg>
);
const Rhythmbox = () => (
  <svg width="40" height="38" viewBox="0 0 40 38">
    <path d="M4 9Q1 19 4 29M36 9Q39 19 36 29" fill="none" stroke="#63688a" strokeWidth="2" />
    <rect x="7" y="1" width="26" height="36" rx="6" fill="#eeeeec" stroke="#c9c9c5" />
    <circle cx="20" cy="18.500" r="9.500" fill="#3a3a3a" /><circle cx="20" cy="18.500" r="7.600" fill="#d8b32c" /><circle cx="20" cy="18.500" r="4.200" fill="#5d5a50" /><circle cx="20" cy="18.500" r="1.800" fill="#d0c8a0" />
  </svg>
);
const Writer = () => (
  <svg width="34" height="40" viewBox="0 0 34 40">
    <path d="M1 1h21l11 11v27H1z" fill="#fff" stroke="#1a6aa4" strokeWidth="1.500" /><path d="M22 1h11v11z" fill="#0c5e9c" />
    <path d="M6 15h9M6 18h7M6 21h7M6 24h7M6 27h20M6 30h15" stroke="#2280bc" strokeWidth="1.600" />
    <rect x="14" y="14" width="14" height="10" fill="#2a86c2" /><path d="M14 24l5-6 3 3 2-2 4 5z" fill="#173f2c" /><circle cx="25" cy="17" r="1.400" fill="#f5d13c" />
  </svg>
);
const Software = () => (
  <svg width="38" height="40" viewBox="0 0 38 40">
    <path d="M13 10V6q0-3 3-3h6q3 0 3 3v4" fill="none" stroke="#c8401a" strokeWidth="2.500" />
    <path d="M2 7h34l1 32H1z" fill="#ee6a35" /><path d="M2 7h34v5H2z" fill="#f58a5c" />
    <path d="M13 31l6-14 6 14M11 27h16" fill="none" stroke="#fff" strokeWidth="2.800" />
  </svg>
);
const HelpIcon = () => (
  <svg width="36" height="36" viewBox="0 0 36 36">
    <circle cx="18" cy="18" r="16.500" fill="#4284c0" stroke="#2a5f98" />
    <path d="M12.500 13.500q0-5 5.500-5t5.500 4.500c0 4-5.500 4-5.500 9" fill="none" stroke="#fff" strokeWidth="3" /><circle cx="18" cy="27" r="1.900" fill="#fff" />
  </svg>
);
const VsCode = () => (
  <svg width="38" height="38" viewBox="0 0 38 38">
    <path d="M27 1L37 5V33L27 37L27 28V10Z" fill="#2aa5ee" /><path d="M27 1V11L5 28 1 25V23Z" fill="#1584cc" /><path d="M27 37V27L5 10 1 13V15Z" fill="#0f78bd" /><path d="M27 1v36l10-4V5z" fill="#2ba3ec" />
  </svg>
);
const Terminal = () => (
  <svg width="38" height="32" viewBox="0 0 38 32">
    <rect x="1" y="1" width="36" height="30" fill="#2e3234" stroke="#c9c9c7" strokeWidth="2.500" />
    <path d="M7 8l4 4-4 4M14 17h7" fill="none" stroke="#f1f1f1" strokeWidth="2" />
  </svg>
);
const OpenIcon = () => (
  <svg width="23" height="22" viewBox="0 0 23 22">
    <path d="M1 1h8l2 2 2-2h5v18H1z" fill="#e9e6e2" stroke="#b5b0aa" /><path d="M4 10h17l1 1-1 9q0 1-1 1H2z" fill="#e8632c" /><path d="M4 10h17l-1 4H3z" fill="#f28a58" />
  </svg>
);
const Chevron = ({ flip, color, edge }) => (
  <svg width="12" height="21" viewBox="0 0 12 21">
    <path transform={flip ? 'translate(12 0) scale(-1 1)' : undefined} d="M8 1h3v3L5 10.500l6 6.500v3H8L1 11.500v-2z" fill={color} stroke={edge} strokeWidth=".8" />
  </svg>
);
const UpIcon = () => (
  <svg width="18" height="23" viewBox="0 0 18 23"><path d="M9 1l8 8v3h-3l-3-2.500V20q0 2-2 2t-2-2V9.500L4 12H1V9z" fill="#ee7c3c" stroke="#b8501c" strokeWidth=".8" /></svg>
);
const UndoIcon = () => (
  <svg width="22" height="18" viewBox="0 0 22 18"><path d="M1 7l8-6v4c8 0 12 4 12 12h-5c0-4-2-6-7-6v3z" fill="#ee7c3c" stroke="#c05a26" strokeWidth=".8" /></svg>
);
const FloatIcon = () => (
  <svg width="11" height="12" viewBox="0 0 11 12"><rect x=".5" y=".5" width="10" height="11" rx="2" fill="none" stroke="#6c6964" /><path d="M5 3h3.500v4H5zM3 5.500h3v4H3z" fill="none" stroke="#6c6964" /></svg>
);
const CloseIcon = () => (
  <svg width="11" height="12" viewBox="0 0 11 12"><rect x=".5" y=".5" width="10" height="11" rx="2" fill="none" stroke="#6c6964" /><path d="M3 3l5 6M8 3l-5 6" stroke="#5a5752" strokeWidth="1.800" /></svg>
);
const TrayIcons = {
  net: <svg width="15" height="16" viewBox="0 0 15 16"><path d="M5 0h5v5H5zM0 11h5v5H0zM10 11h5v5h-5z" fill="#dfdbd2" /><path d="M7.500 5v3M2.500 11V8h10v3" fill="none" stroke="#dfdbd2" strokeWidth="1.300" /></svg>,
  sound: <svg width="16" height="14" viewBox="0 0 16 14"><path d="M0 4h3l4-4v14l-4-4H0z" fill="#dfdbd2" /><path d="M9 4q1.500 3 0 6M11 2q3 5 0 10" fill="none" stroke="#dfdbd2" strokeWidth="1.400" /><path d="M13.500 1q3 6 0 12" fill="none" stroke="#8b8880" strokeWidth="1.300" /></svg>,
  battery: <svg width="13" height="17" viewBox="0 0 13 17"><path d="M3.500 3V1h6v2h2.500v13H1V3z" fill="none" stroke="#98958d" strokeWidth="2" /><path d="M7.500 4.500L3.500 10H6l-.5 4 4-5.500H7z" fill="#efece6" /></svg>,
};
const DockButtons = () => <DockIcons><FloatIcon /><CloseIcon /></DockIcons>;

export default function App() {
  return (
    <Screen>
      <GlobalStyle />
      <TopBar>
        <TopGroup>
          <Fit w={68} bold>Activities</Fit><Gap $w={21} /><KcgIcon w={14} h={12} /><Gap $w={7} />
          <Fit w={84} bold>kcachegrind</Fit><Gap $w={7} /><Caret $color="#dfdbd2" />
        </TopGroup>
        <TopCenter><Fit w={56} bold>四 17:34</Fit></TopCenter>
        <TopGroup>
          <Fit w={15} bold>英</Fit><Gap $w={6} /><Caret $color="#dfdbd2" /><Gap $w={32} />
          {TrayIcons.net}<Gap $w={13} />{TrayIcons.sound}<Gap $w={14} />{TrayIcons.battery}<Gap $w={13} /><Caret $color="#dfdbd2" />
        </TopGroup>
      </TopBar>
      <Body>
        <Launcher>
          <Slot><Firefox /></Slot><Slot><Thunderbird /></Slot><Slot><Files /></Slot><Slot><Rhythmbox /></Slot><Slot><Writer /></Slot>
          <Slot><Software /></Slot><Slot><HelpIcon /></Slot><Slot $running><VsCode /></Slot><Slot $running><Terminal /></Slot>
          <Slot $running $active><KcgIcon w={34} h={27} /></Slot>
          <AppsGrid>{dots(9)}</AppsGrid>
        </Launcher>
        <Window>
          <TitleBar>
            <Fit w={513} bold>callgrind.out.10881 [./test/b_plus_tree_concurrent_test] — KCachegrind</Fit>
            <Buttons>
              <WinButton><svg width="8" height="8"><path d="M0 4.500h8" stroke="#3a3935" strokeWidth="1.200" /></svg></WinButton>
              <WinButton><svg width="8" height="8"><rect x=".6" y="1" width="6.800" height="6" fill="none" stroke="#3a3935" /></svg></WinButton>
              <WinButton $close><svg width="8" height="8"><path d="M1 1l6 6M7 1L1 7" stroke="#5a1a08" strokeWidth="1.200" /></svg></WinButton>
            </Buttons>
          </TitleBar>
          <MenuBar>
            <Fit w={24}><U>F</U>ile</Fit><Fit w={33}><U>V</U>iew</Fit><Fit w={18}><U>G</U>o</Fit><Fit w={56}><U>S</U>ettings</Fit><Fit w={32}><U>H</U>elp</Fit>
          </MenuBar>
          <ToolBar>
            <OpenIcon /><Gap $w={3} /><Fit w={48}>Open...</Fit><Gap $w={14} /><ToolSeparator /><Gap $w={12} />
            <Chevron color="#ee7c3c" edge="#b8501c" /><Gap $w={10} /><Fit w={32}>Back</Fit><Gap $w={11} /><Caret /><Gap $w={15} />
            <Chevron flip color="#c4c0bb" edge="#a9a5a0" /><Gap $w={8} /><Fit w={57} color="#c0bcb7">Forward</Fit><Gap $w={10} /><Caret $color="#c0bcb7" /><Gap $w={10} />
            <UpIcon /><Gap $w={6} /><Fit w={19}>Up</Fit><Gap $w={11} /><Caret /><Gap $w={7} /><ToolSeparator /><Gap $w={4} />
            <ToggleButton $w={69}><Fit w={55}>Relative</Fit></ToggleButton>
            <ToggleButton $w={146} $h={28} $pad={5}><UndoIcon /><Fit w={107}>Cycle Detection</Fit></ToggleButton>
            <ToggleButton $w={136}><Fit w={122}>Relative to Parent</Fit></ToggleButton>
            <ToggleButton $w={142}><Fit w={128}>Shorten Templates</Fit></ToggleButton>
            <Gap $w={7} />
            <Combo $w={300}><Fit w={112}>Cycle Estimation</Fit><Caret $small /></Combo>
          </ToolBar>
          <Main>
            <Dock>
              <DockTitle $h={22}><Fit w={103}><U>P</U>arts Overview</Fit><DockButtons /></DockTitle>
              <PartsMap />
              <HGrip $h={16} $pr={3}>{dots(6)}</HGrip>
              <DockTitle $h={18}><Fit w={75}>F<U>l</U>at Profile</Fit><DockButtons /></DockTitle>
              <SearchBlock>
                <SearchRow>
                  <Fit w={49}>S<U>e</U>arch:</Fit><SearchInput />
                  <Combo $w={128}><Fit w={96}>(No Grouping)</Fit><Caret $small /></Combo>
                </SearchRow>
              </SearchBlock>
              <FlatProfile />
            </Dock>
            <VGrip>{dots(6)}</VGrip>
            <Right>
              <FunctionTitle><Fit w={549} bold>bustub::BPlusTree&lt;&gt;::FindLeafPage(bustub::GenericKey&lt;&gt; const&amp;, bool, bool)</Fit></FunctionTitle>
              <Tabs>
                <Tab $w={65} $first><Fit w={40}><U>T</U>ypes</Fit></Tab>
                <Tab $w={70}><Fit w={46}>Callers</Fit></Tab>
                <Tab $w={93} $on><Fit w={67}>All Callers</Fit></Tab>
                <Tab $w={99}><Fit w={75}>Callee Map</Fit></Tab>
                <Tab $w={110}><Fit w={85}>S<U>o</U>urce Code</Fit></Tab>
              </Tabs>
              <Pane $h={520}><AllCallers /></Pane>
              <HGrip $h={5}>{dots(6)}</HGrip>
              <Pane $h={520}><CallGraph /></Pane>
              <Tabs $bottom>
                <Tab $bottom $w={61} $first><Fit w={35}>Pa<U>r</U>ts</Fit></Tab>
                <Tab $bottom $w={73}><Fit w={48}><U>C</U>allees</Fit></Tab>
                <Tab $bottom $w={93} $on><Fit w={69}>Call Graph</Fit></Tab>
                <Tab $bottom $w={95}><Fit w={70}><U>A</U>ll Callees</Fit></Tab>
                <Tab $bottom $w={97}><Fit w={72}>Caller Map</Fit></Tab>
                <Tab $bottom $w={119}><Fit w={95}><U>M</U>achine Code</Fit></Tab>
              </Tabs>
            </Right>
          </Main>
          <StatusBar><Fit w={464}>callgrind.out.10881 [1-7] - Total Cycle Estimation Cost: 3 535 837 119</Fit></StatusBar>
        </Window>
      </Body>
    </Screen>
  );
}
